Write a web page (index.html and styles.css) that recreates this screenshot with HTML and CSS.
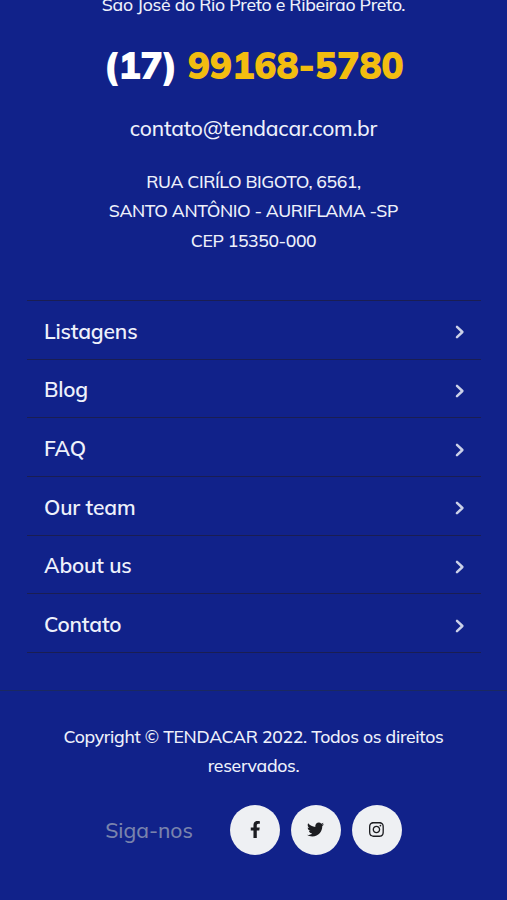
FILE: index.html
```
<!DOCTYPE html>
<html lang="pt-BR">
<head>
    <meta charset="UTF-8">
    <meta name="viewport" content="width=device-width, initial-scale=1.0">
    <title>TENDACAR</title>
    <link rel="stylesheet" href="styles.css">
</head>
<body>
    <footer class="footer">
        <div class="contact">
            <p class="cities">São José do Rio Preto e Ribeirão Preto.</p>
            <a class="phone" href="tel:17991685780">(17) <span>99168-5780</span></a>
            <a class="email" href="mailto:contato@tendacar.com.br">contato@tendacar.com.br</a>
            <address class="address">
                RUA CIRÍLO BIGOTO, 6561,<br>
                SANTO ANTÔNIO - AURIFLAMA -SP<br>
                CEP 15350-000
            </address>
        </div>

        <nav class="menu">
            <a href="#">Listagens<svg viewBox="0 0 10 14"><path d="M2 1.8 7.4 7 2 12.2"/></svg></a>
            <a href="#">Blog<svg viewBox="0 0 10 14"><path d="M2 1.8 7.4 7 2 12.2"/></svg></a>
            <a href="#">FAQ<svg viewBox="0 0 10 14"><path d="M2 1.8 7.4 7 2 12.2"/></svg></a>
            <a href="#">Our team<svg viewBox="0 0 10 14"><path d="M2 1.8 7.4 7 2 12.2"/></svg></a>
            <a href="#">About us<svg viewBox="0 0 10 14"><path d="M2 1.8 7.4 7 2 12.2"/></svg></a>
            <a href="#">Contato<svg viewBox="0 0 10 14"><path d="M2 1.8 7.4 7 2 12.2"/></svg></a>
        </nav>

        <div class="bottom">
            <p class="copyright">Copyright © TENDACAR 2022. Todos os direitos<br>reservados.</p>
            <div class="social">
                <span class="social-label">Siga-nos</span>
                <a href="#" aria-label="Facebook">
                    <svg viewBox="0 0 320 512"><path d="M279.14 288l14.22-92.66h-88.91v-60.13c0-25.35 12.42-50.06 52.24-50.06h40.42V6.26S260.43 0 225.36 0c-73.22 0-121.08 44.38-121.08 124.72v70.62H22.89V288h81.39v224h100.17V288z"/></svg>
                </a>
                <a href="#" aria-label="Twitter">
                    <svg viewBox="0 0 512 512"><path d="M459.37 151.716c.325 4.548.325 9.097.325 13.645 0 138.72-105.583 298.558-298.558 298.558-59.452 0-114.68-17.219-161.137-47.106 8.447.974 16.568 1.299 25.34 1.299 49.055 0 94.213-16.568 130.274-44.832-46.132-.975-84.792-31.188-98.112-72.772 6.498.974 12.995 1.624 19.818 1.624 9.421 0 18.843-1.3 27.614-3.573-48.081-9.747-84.143-51.98-84.143-102.985v-1.299c13.969 7.797 30.214 12.67 47.431 13.319-28.264-18.843-46.781-51.005-46.781-87.391 0-19.492 5.197-37.36 14.294-52.954 51.655 63.675 129.3 105.258 216.365 109.807-1.624-7.797-2.599-15.918-2.599-24.04 0-57.828 46.782-104.934 104.934-104.934 30.213 0 57.502 12.67 76.67 33.137 23.715-4.548 46.456-13.32 66.599-25.34-7.798 24.366-24.366 44.833-46.132 57.827 21.117-2.273 41.584-8.122 60.426-16.243-14.292 20.791-32.161 39.308-52.628 54.253z"/></svg>
                </a>
                <a href="#" aria-label="Instagram">
                    <svg viewBox="0 0 448 512"><path d="M224.1 141c-63.6 0-114.9 51.3-114.9 114.9s51.3 114.9 114.9 114.9S339 319.5 339 255.9 287.7 141 224.1 141zm0 189.6c-41.1 0-74.7-33.5-74.7-74.7s33.5-74.7 74.7-74.7 74.7 33.5 74.7 74.7-33.6 74.7-74.7 74.7zm146.4-194.3c0 14.9-12 26.8-26.8 26.8-14.9 0-26.8-12-26.8-26.8s12-26.8 26.8-26.8 26.8 12 26.8 26.8zm76.1 27.2c-1.700-35.900-9.900-67.700-36.200-93.900-26.200-26.200-58-34.400-93.900-36.200-37-2.100-147.900-2.100-184.900 0-35.800 1.700-67.600 9.900-93.900 36.100s-34.400 58-36.200 93.900c-2.100 37-2.100 147.900 0 184.900 1.700 35.900 9.900 67.700 36.200 93.900s58 34.400 93.900 36.200c37 2.100 147.900 2.100 184.900 0 35.900-1.700 67.700-9.900 93.900-36.200 26.200-26.200 34.400-58 36.200-93.900 2.100-37 2.100-147.800 0-184.800zM398.800 388c-7.800 19.600-22.900 34.700-42.600 42.600-29.500 11.700-99.500 9-132.100 9s-102.700 2.600-132.100-9c-19.600-7.800-34.700-22.900-42.600-42.600-11.700-29.500-9-99.500-9-132.100s-2.600-102.700 9-132.100c7.800-19.600 22.900-34.700 42.600-42.600 29.500-11.700 99.500-9 132.100-9s102.700-2.600 132.100 9c19.600 7.800 34.700 22.900 42.600 42.600 11.700 29.500 9 99.500 9 132.100s2.700 102.700-9 132.100z"/></svg>
                </a>
            </div>
        </div>
    </footer>
</body>
</html>
```
FILE: styles.css
```
* {
    box-sizing: border-box;
}

body {
    margin: 0;
    background: #11228a;
    color: #eef1fb;
    font-family: Muli, Mulish, Lato, "Open Sans", sans-serif;
    font-size: 17.6px;
    font-weight: 500;
    overflow: hidden;
}

a {
    color: inherit;
    text-decoration: none;
}

.footer {
    height: 900px;
    overflow: hidden;
}

.contact {
    display: flex;
    flex-direction: column;
    align-items: center;
    height: 300px;
    text-align: center;
    white-space: nowrap;
}

.cities {
    margin: -10px 0 0;
    line-height: 29px;
    letter-spacing: -0.3px;
}

.phone {
    margin-top: 21px;
    font-size: 37.6px;
    font-weight: 900;
    line-height: 50px;
    letter-spacing: -0.4px;
    color: #fff;
}

.phone span {
    color: #f2bd10;
}

.email {
    margin-top: 23px;
    font-size: 21px;
    line-height: 30px;
    letter-spacing: -0.22px;
}

.address {
    margin-top: 24px;
    font-style: normal;
    line-height: 29.3px;
    letter-spacing: -0.4px;
}

.menu {
    margin: 0 26px 0 27px;
    border-top: 1px solid #1a1e52;
}

.menu a {
    display: flex;
    align-items: center;
    justify-content: space-between;
    height: 58.67px;
    padding: 2px 16px 0 17px;
    border-bottom: 1px solid #1a1e52;
    font-size: 21px;
    font-weight: 600;
    letter-spacing: -0.15px;
}

.menu svg {
    width: 10px;
    height: 14px;
    margin-top: 3px;
    fill: none;
    stroke: #cbd1e8;
    stroke-width: 2.5;
    stroke-linecap: round;
    stroke-linejoin: round;
}

.bottom {
    margin-top: 37px;
    padding-top: 31px;
    border-top: 1px solid #1b2960;
    text-align: center;
}

.copyright {
    margin: 0;
    line-height: 29.3px;
    letter-spacing: -0.3px;
    white-space: nowrap;
}

.social {
    display: flex;
    align-items: center;
    justify-content: center;
    gap: 11px;
    margin-top: 24px;
}

.social-label {
    margin-right: 26px;
    font-size: 21px;
    color: #7983ad;
}

.social a {
    display: flex;
    align-items: center;
    justify-content: center;
    width: 50px;
    height: 50px;
    border-radius: 50%;
    background: #eef0f3;
}

.social svg {
    height: 17px;
    fill: #1c1d21;
}
```
